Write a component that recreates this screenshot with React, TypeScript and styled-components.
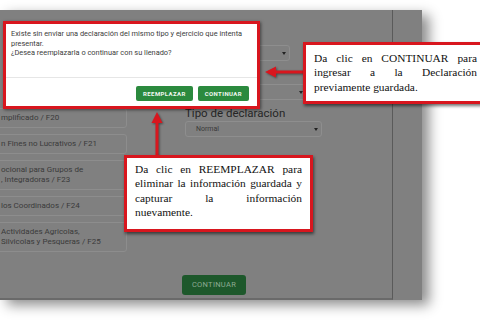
import * as React from 'react';
import styled, { createGlobalStyle } from 'styled-components';

const red = '#d8161e';

const GlobalStyle = createGlobalStyle`
  html, body {
    margin: 0;
    padding: 0;
    background: #ffffff;
  }
  body {
    font-family: Roboto, "Liberation Sans", sans-serif;
  }
`

const Stage = styled.div`
  position: relative;
  width: 480px;
  height: 320px;
  overflow: hidden;
  background: #ffffff;
`

// the dimmed page behind the modal
const Screen = styled.div`
  margin-top: 10px;
  width: 422px;
  height: 290px;
  display: flex;
  background: #808080;
  box-shadow: 7px 5px 12px rgba(0, 0, 0, 0.45);
`

const Panel = styled.div`
  width: 392px;
  height: 288px;
  display: flex;
  flex-direction: column;
  border-right: 1px solid #5a5a5a;
  border-bottom: 2px solid #6a6a6a;
  overflow: hidden;
`

const Columns = styled.div`
  display: flex;
`

const CardList = styled.div`
  width: 148px;
  margin-left: -21px;
  padding-top: 98px;
  display: flex;
  flex-direction: column;
  gap: 6px;
`

const Card = styled.div`
  box-sizing: border-box;
  padding: 4px 8px 4px 21px;
  border: 1px solid #8d8d8d;
  border-radius: 3px;
  font-size: 8px;
  line-height: 10px;
  color: #3a3a3a;
  white-space: nowrap;
`

const FormCol = styled.div`
  margin-left: 58px;
  padding-top: 35px;
  display: flex;
  flex-direction: column;
`

const Select = styled.div<{ $width: number; $gap?: number }>`
  box-sizing: border-box;
  position: relative;
  width: ${p => p.$width}px;
  height: 16px;
  margin-top: ${p => p.$gap || 0}px;
  padding-left: 10px;
  border: 1px solid #8e8e8e;
  border-radius: 3px;
  font-size: 7px;
  line-height: 14px;
  color: #3a3a3a;
`

const Caret = styled.span`
  position: absolute;
  right: 3px;
  top: 6px;
  border-left: 2px solid transparent;
  border-right: 2px solid transparent;
  border-top: 3px solid #222;
`

const Label = styled.div`
  margin-top: 5px;
  font-size: 11.5px;
  line-height: 16px;
  color: #262626;
`

const ButtonRow = styled.div`
  padding: 20px 0 0 182px;
`

const PageButton = styled.div`
  display: inline-flex;
  align-items: center;
  justify-content: center;
  width: 64px;
  height: 20px;
  border-radius: 3px;
  background: #1d582b;
  color: #8dab93;
  font-size: 7.5px;
  letter-spacing: 0.3px;
`

// modal
const Dialog = styled.div`
  position: absolute;
  left: 3px;
  top: 21px;
  box-sizing: border-box;
  width: 257px;
  height: 88px;
  border: 3px solid ${red};
  background: #ffffff;
  box-shadow: 1px 1px 3px rgba(0, 0, 0, 0.5);
  display: flex;
  flex-direction: column;
`

const DialogBody = styled.div`
  padding: 5px 6px 0 5px;
  height: 48px;
  border-bottom: 1px solid #e6e6e6;
  font-size: 7.4px;
  line-height: 9.5px;
  color: #3c3c3c;
`

const DialogFooter = styled.div`
  display: flex;
  justify-content: flex-end;
  gap: 5px;
  padding: 8px 8px 0 0;
`

const GreenButton = styled.div`
  display: flex;
  align-items: center;
  padding: 0 7px;
  height: 15px;
  border-radius: 2px;
  background: #2b8a3e;
  color: #f2f8f2;
  font-size: 6px;
  font-weight: 700;
  letter-spacing: 0.4px;
`

const Callout = styled.div<{ $left: number; $top: number; $width: number; $height: number; $pad: string }>`
  position: absolute;
  left: ${p => p.$left}px;
  top: ${p => p.$top}px;
  width: ${p => p.$width}px;
  height: ${p => p.$height}px;
  box-sizing: border-box;
  padding: ${p => p.$pad};
  border: 3px solid ${red};
  background: #ffffff;
  box-shadow: 1px 2px 3px rgba(0, 0, 0, 0.55);
  font-family: "Liberation Serif", "DejaVu Serif", serif;
  font-size: 11.4px;
  line-height: 14.4px;
  color: #111111;
  text-align: justify;
`

const Arrow = styled.svg<{ $left: number; $top: number }>`
  position: absolute;
  left: ${p => p.$left}px;
  top: ${p => p.$top}px;
  overflow: visible;
  filter: drop-shadow(1px 1px 1px rgba(0, 0, 0, 0.45));
`

const cards = [
  ['mplificado / F20'],
  ['n Fines no Lucrativos / F21'],
  ['ocional para Grupos de', ', Integradoras / F23'],
  ['los Coordinados / F24'],
  ['Actividades Agricolas,', 'Silvicolas y Pesqueras / F25'],
];

const App: React.FC = () => (
  <Stage>
    <GlobalStyle />
    <Screen>
      <Panel>
        <Columns>
          <CardList>
            {cards.map((lines, i) => (
              <Card key={i}>
                {lines.map((l, j) => <div key={j}>{l}</div>)}
              </Card>
            ))}
          </CardList>
          <FormCol>
            <Select $width={105}><Caret /></Select>
            <Select $width={122} $gap={23}><Caret /></Select>
            <Label>Tipo de declaración</Label>
            <Select $width={137}>Normal<Caret /></Select>
          </FormCol>
        </Columns>
        <ButtonRow>
          <PageButton>CONTINUAR</PageButton>
        </ButtonRow>
      </Panel>
    </Screen>

    <Dialog>
      <DialogBody>
        Existe sin enviar una declaración del mismo tipo y ejercicio que intenta presentar.
        <br />
        ¿Desea reemplazarla o continuar con su llenado?
      </DialogBody>
      <DialogFooter>
        <GreenButton>REEMPLAZAR</GreenButton>
        <GreenButton>CONTINUAR</GreenButton>
      </DialogFooter>
    </Dialog>

    <Arrow $left={265} $top={64} width={40} height={16} viewBox="0 0 40 16">
      <line x1="8" y1="8" x2="40" y2="8" stroke={red} strokeWidth="3" />
      <polygon points="0,8 11,2.5 11,13.5" fill={red} />
    </Arrow>
    <Callout $left={303} $top={42} $width={195} $height={62} $pad="6px 18px 0 8px">
      Da clic en CONTINUAR para ingresar a la Declaración previamente guardada.
    </Callout>

    <Arrow $left={151} $top={112} width={12} height={44} viewBox="0 0 12 44">
      <line x1="6" y1="8" x2="6" y2="44" stroke={red} strokeWidth="3" />
      <polygon points="6,0 0.5,11 11.5,11" fill={red} />
    </Arrow>
    <Callout $left={124} $top={155} $width={189} $height={77} $pad="4px 8px 0 8px">
      Da clic en REEMPLAZAR para eliminar la información guardada y capturar la información nuevamente.
    </Callout>
  </Stage>
);

export default App;
